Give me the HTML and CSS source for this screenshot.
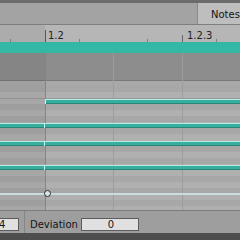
FILE: index.html
```html
<!DOCTYPE html>
<html>
<head>
<meta charset="utf-8">
<link rel="stylesheet" href="styles.css">
</head>
<body>
<div class="app">
  <div class="topstrip"></div>
  <div class="tabbar">
    <div class="spacer"></div>
    <div class="tab">Notes</div>
  </div>
  <div class="editor">
    <div class="ruler">
      <div class="shade"></div>
      <span class="tick major" style="left:45px"></span>
      <span class="label" style="left:48px">1.2</span>
      <span class="tick minor" style="left:10px"></span>
      <span class="tick minor" style="left:79px"></span>
      <span class="tick minor" style="left:147px"></span>
      <span class="tick mid" style="left:182px"></span>
      <span class="label" style="left:187px">1.2.3</span>
      <span class="tick minor" style="left:216px"></span>
    </div>
    <div class="clipbar"></div>
    <div class="grid">
      <div class="fold"></div>
      <div class="rows">
        <div class="row w first"></div>
        <div class="row b"></div>
        <div class="row w"></div>
        <div class="row w oct"></div>
        <div class="row b"></div>
        <div class="row w"></div>
        <div class="row b"></div>
        <div class="row w"></div>
        <div class="row b"></div>
        <div class="row w"></div>
        <div class="row w"></div>
        <div class="row b"></div>
        <div class="row w"></div>
        <div class="row b"></div>
        <div class="row w c"></div>
        <div class="row w"></div>
        <div class="row b"></div>
        <div class="row w"></div>
        <div class="row b"></div>
        <div class="row w"></div>
        <div class="row b"></div>
        <div class="row w"></div>
      </div>
      <div class="shade"></div>
      <div class="vline dark" style="left:45px"></div>
      <div class="vline" style="left:113px"></div>
      <div class="vline" style="left:182px"></div>
      <div class="note start" style="left:45px; width:195px; top:46px"></div>
      <div class="note" style="left:0; width:44px; top:70px"></div>
      <div class="note start" style="left:44px; width:196px; top:70px"></div>
      <div class="note" style="left:0; width:44px; top:88px"></div>
      <div class="note start" style="left:44px; width:196px; top:88px"></div>
      <div class="note" style="left:0; width:44px; top:112px"></div>
      <div class="note start" style="left:44px; width:196px; top:112px"></div>
      <div class="velline"></div>
      <div class="handle"></div>
    </div>
  </div>
  <div class="panel">
    <div class="field first"><span class="val">4</span></div>
    <div class="sep"></div>
    <div class="plabel">Deviation</div>
    <div class="field center">0</div>
  </div>
  <div class="bottomstrip"></div>
</div>
</body>
</html>
```
FILE: styles.css
```css
html, body {
  margin: 0;
  padding: 0;
}
body {
  width: 240px;
  height: 240px;
  overflow: hidden;
  background: #9e9e9e;
  font-family: "DejaVu Sans", "Liberation Sans", sans-serif;
}
.app {
  display: flex;
  flex-direction: column;
  height: 240px;
}
.topstrip {
  height: 3px;
  background: #6b6b6b;
  flex: none;
}
.tabbar {
  height: 21px;
  flex: none;
  display: flex;
  background: #a3a3a3;
  border-bottom: 1px solid #7e7e7e;
}
.tabbar .spacer {
  flex: 1;
}
.tab {
  box-sizing: border-box;
  width: 43px;
  border-left: 1px solid #8a8a8a;
  background: #bebebe;
  font-size: 10px;
  color: #141414;
  padding-left: 13px;
  padding-top: 2px;
  display: flex;
  align-items: center;
  white-space: nowrap;
  overflow: hidden;
}
.editor {
  flex: none;
  display: flex;
  flex-direction: column;
}
.ruler {
  position: relative;
  height: 17px;
  background: #b6b6b6;
}
.shade {
  position: absolute;
  left: 0;
  top: 0;
  bottom: 0;
  width: 45px;
  background: rgba(0, 0, 0, 0.05);
}
.tick {
  position: absolute;
  width: 1px;
  background: #5a5a5a;
}
.tick.major {
  top: 5px;
  bottom: 0;
  background: #555;
}
.tick.mid {
  top: 10px;
  bottom: 0;
  background: #666;
}
.tick.minor {
  top: 14px;
  bottom: 0;
  background: #808080;
}
.label {
  position: absolute;
  top: 5px;
  font-size: 10px;
  line-height: 12px;
  color: #222;
}
.clipbar {
  height: 11px;
  background: #32b8a4;
}
.grid {
  position: relative;
  height: 157px;
  overflow: hidden;
  background: #acacac;
}
.fold {
  height: 27px;
  background: #8d8d8d;
}
.rows {
  display: flex;
  flex-direction: column;
}
.row {
  height: 6px;
  flex: none;
  box-sizing: border-box;
}
.row.w {
  background: #b0b0b0;
}
.row.b {
  background: #a7a7a7;
}
.row.first {
  border-top: 1px solid #787878;
  background: #a9a9a9;
}
.row.oct {
  border-top: 1px solid #9a9a9a;
}
.row.c {
  border-bottom: 1px solid #8a8a92;
}
.vline {
  position: absolute;
  top: 0;
  bottom: 0;
  width: 1px;
  background: #9c9c9c;
}
.vline.dark {
  background: #858585;
}
.note {
  position: absolute;
  height: 5px;
  box-sizing: border-box;
  background: linear-gradient(#b4ece6 0, #b4ece6 1px, #38ae9e 1px, #38ae9e 4px, #26867a 4px);
}
.note.start {
  border-left: 1px solid #c8f4ef;
}
.velline {
  position: absolute;
  left: 0;
  right: 0;
  top: 140px;
  height: 2px;
  background: #cadcdc;
}
.handle {
  position: absolute;
  left: 44px;
  top: 137px;
  width: 5px;
  height: 5px;
  border: 1.5px solid #26302f;
  border-radius: 50%;
  background: #d4e8e6;
}
.panel {
  flex: none;
  box-sizing: content-box;
  border-top: 1px solid #7c7c7c;
  background: #9e9e9e;
  display: flex;
  align-items: flex-start;
  padding-top: 7px;
  height: 15px;
}
.field {
  box-sizing: border-box;
  height: 13px;
  background: #e0e0e0;
  border: 1px solid #5c5c5c;
  font-size: 10px;
  line-height: 11px;
  color: #141414;
  white-space: nowrap;
}
.field.first {
  width: 20px;
  margin-left: -1px;
  padding-left: 0;
}
.val {
  display: inline-block;
  margin-left: -1px;
}
.field.center {
  width: 58px;
  text-align: center;
  padding-left: 2px;
}
.sep {
  width: 1px;
  height: 22px;
  margin-top: -7px;
  margin-left: 5px;
  margin-right: 5px;
  background: #858585;
}
.plabel {
  width: 51px;
  font-size: 10px;
  line-height: 13px;
  color: #141414;
}
.bottomstrip {
  flex: none;
  height: 7px;
  background: #4e4e4e;
}
```
